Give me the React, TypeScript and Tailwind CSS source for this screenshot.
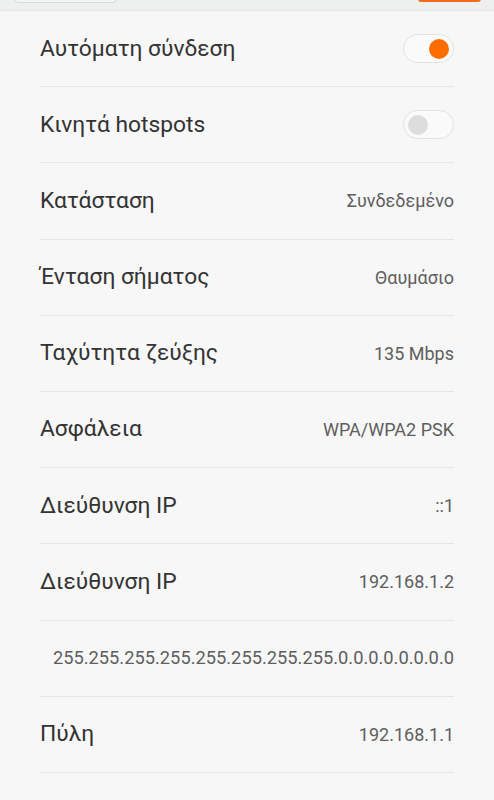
import { useState } from "react";

type Row =
  | { kind: "toggle"; label: string; on: boolean }
  | { kind: "value"; label: string; value: string }
  | { kind: "plain"; value: string };

const rows: Row[] = [
  { kind: "toggle", label: "Αυτόματη σύνδεση", on: true },
  { kind: "toggle", label: "Κινητά hotspots", on: false },
  { kind: "value", label: "Κατάσταση", value: "Συνδεδεμένο" },
  { kind: "value", label: "Ένταση σήματος", value: "Θαυμάσιο" },
  { kind: "value", label: "Ταχύτητα ζεύξης", value: "135 Mbps" },
  { kind: "value", label: "Ασφάλεια", value: "WPA/WPA2 PSK" },
  { kind: "value", label: "Διεύθυνση IP", value: "::1" },
  { kind: "value", label: "Διεύθυνση IP", value: "192.168.1.2" },
  { kind: "plain", value: "255.255.255.255.255.255.255.255.0.0.0.0.0.0.0.0" },
  { kind: "value", label: "Πύλη", value: "192.168.1.1" },
];

function Toggle({ on, onClick }: { on: boolean; onClick: () => void }) {
  return (
    <button
      type="button"
      onClick={onClick}
      className={`flex h-[29px] w-[51px] items-center rounded-full border border-[#e2e2e2] bg-[#fafafa] px-[4px] ${
        on ? "justify-end" : "justify-start"
      }`}
    >
      <span
        className={`h-[20px] w-[20px] rounded-full ${on ? "bg-[#ff6d00]" : "bg-[#dddddd]"}`}
      />
    </button>
  );
}

export default function App() {
  const [toggles, setToggles] = useState<Record<number, boolean>>({ 0: true, 1: false });

  return (
    <div className="min-h-[800px] w-[494px] overflow-hidden bg-[#f7f7f7] font-['Roboto',sans-serif]">
      {/* top action bar, scrolled mostly out of view */}
      <div className="relative h-[11px] border-b border-[#e4e6e5] bg-[#eef0ef]">
        <div className="absolute left-[15px] top-[-20px] h-[23px] w-[101px] rounded-[3px] border border-[#d8dbd9] bg-[#f4f5f4]" />
        <div className="absolute left-[418px] top-[-20px] h-[22px] w-[63px] rounded-[3px] bg-[#f26b1d]" />
      </div>

      <div className="px-[40px]">
        {rows.map((row, i) => (
          <div
            key={i}
            className="flex h-[76.2px] items-center justify-between border-b border-[#e6e6e6]"
          >
            {row.kind === "plain" ? (
              <span className="ml-auto text-[18.3px] text-[#5e5e5e]">{row.value}</span>
            ) : (
              <>
                <span className="text-[22.8px] text-[#333333]">{row.label}</span>
                {row.kind === "toggle" ? (
                  <Toggle
                    on={!!toggles[i]}
                    onClick={() => setToggles((t) => ({ ...t, [i]: !t[i] }))}
                  />
                ) : (
                  <span className="text-[18px] text-[#5e5e5e]">{row.value}</span>
                )}
              </>
            )}
          </div>
        ))}
      </div>
    </div>
  );
}
